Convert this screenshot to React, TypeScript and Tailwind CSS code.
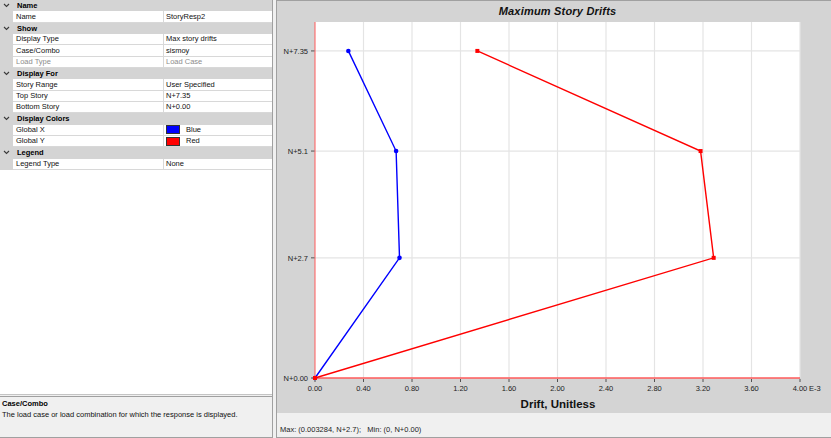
import React from "react";

const FONT = '"Liberation Sans", Arial, sans-serif';

type Row =
  | { kind: "header"; label: string }
  | { kind: "prop"; name: string; value: string; disabled?: boolean; swatch?: string };

const rows: Row[] = [
  { kind: "header", label: "Name" },
  { kind: "prop", name: "Name", value: "StoryResp2" },
  { kind: "header", label: "Show" },
  { kind: "prop", name: "Display Type", value: "Max story drifts" },
  { kind: "prop", name: "Case/Combo", value: "sismoy" },
  { kind: "prop", name: "Load Type", value: "Load Case", disabled: true },
  { kind: "header", label: "Display For" },
  { kind: "prop", name: "Story Range", value: "User Specified" },
  { kind: "prop", name: "Top Story", value: "N+7.35" },
  { kind: "prop", name: "Bottom Story", value: "N+0.00" },
  { kind: "header", label: "Display Colors" },
  { kind: "prop", name: "Global X", value: "Blue", swatch: "#0000ff" },
  { kind: "prop", name: "Global Y", value: "Red", swatch: "#ff0000" },
  { kind: "header", label: "Legend" },
  { kind: "prop", name: "Legend Type", value: "None" },
];

function Chevron() {
  return (
    <svg width="7" height="5" viewBox="0 0 7 5">
      <path d="M1 1 L3.5 3.5 L6 1" stroke="#3a3a3a" strokeWidth="1.1" fill="none" />
    </svg>
  );
}

function GridRow({ row }: { row: Row }) {
  if (row.kind === "header") {
    return (
      <div className="flex h-[11.33px] items-center bg-[#d4d4d4]">
        <div className="flex w-[13px] justify-center">
          <Chevron />
        </div>
        <span className="pl-[4px] font-bold text-[#000]">{row.label}</span>
      </div>
    );
  }
  return (
    <div className="flex h-[11.33px] bg-[#d4d4d4]">
      <div className="w-[13px]" />
      <div className="flex flex-1 border-b border-[#d8d8d8] bg-white">
        <div
          className={`flex w-[151px] items-center border-r border-[#d8d8d8] pl-[3px] ${
            row.disabled ? "text-[#8d8d8d]" : "text-[#111]"
          }`}
        >
          {row.name}
        </div>
        <div
          className={`flex flex-1 items-center pl-[2px] ${
            row.disabled ? "text-[#8d8d8d]" : "text-[#111]"
          }`}
        >
          {row.swatch && (
            <span
              className="mr-[6px] inline-block h-[9px] w-[14px] border border-[#333]"
              style={{ backgroundColor: row.swatch }}
            />
          )}
          {row.value}
        </div>
      </div>
    </div>
  );
}

// plot geometry (svg units)
const X0 = 38;
const XU = 121.25; // px per 1.0 E-3
const Y0 = 356;
const YU = 44.5; // px per metre of elevation
const px = (v: number) => X0 + v * XU;
const py = (v: number) => Y0 - v * YU;

const stories = [
  { label: "N+0.00", v: 0 },
  { label: "N+2.7", v: 2.7 },
  { label: "N+5.1", v: 5.1 },
  { label: "N+7.35", v: 7.35 },
];
const xTicks = [0, 0.4, 0.8, 1.2, 1.6, 2.0, 2.4, 2.8, 3.2, 3.6, 4.0];

const blue = [
  [0, 0],
  [0.697, 2.7],
  [0.669, 5.1],
  [0.275, 7.35],
];
const red = [
  [0, 0],
  [3.288, 2.7],
  [3.18, 5.1],
  [1.339, 7.35],
];

function DriftChart() {
  const pts = (d: number[][]) => d.map(([x, y]) => `${px(x)},${py(y)}`).join(" ");
  return (
    <svg width="553" height="391" className="block" style={{ fontFamily: FONT }}>
      <rect x={X0} y={0} width={485} height={356} fill="#ffffff" />
      {xTicks.slice(1).map((t) => (
        <line key={t} x1={px(t)} x2={px(t)} y1={0} y2={356} stroke="#e4e4e4" strokeWidth="1.2" />
      ))}
      {stories.slice(1).map((s) => (
        <line key={s.label} x1={X0} x2={523} y1={py(s.v)} y2={py(s.v)} stroke="#e4e4e4" strokeWidth="1.2" />
      ))}
      {/* axes */}
      <line x1={X0} x2={X0} y1={0} y2={357} stroke="#ff5a5a" strokeWidth="1" />
      <line x1={X0} x2={523} y1={356} y2={356} stroke="#ff5a5a" strokeWidth="1.6" />
      {/* y ticks and labels */}
      {stories.map((s) => (
        <g key={s.label}>
          <line x1={34} x2={37.5} y1={py(s.v)} y2={py(s.v)} stroke="#444" strokeWidth="0.9" />
          <text x={31} y={py(s.v) + 2.7} fontSize="7.5" textAnchor="end" fill="#222">
            {s.label}
          </text>
        </g>
      ))}
      {/* x ticks and labels */}
      {xTicks.map((t) => (
        <g key={t}>
          <line x1={px(t)} x2={px(t)} y1={357} y2={360} stroke="#444" strokeWidth="0.9" />
          <text x={px(t)} y={369} fontSize="7.5" textAnchor="middle" fill="#222">
            {t.toFixed(2)}
          </text>
        </g>
      ))}
      <text x={px(4) + 9} y={369} fontSize="7.5" fill="#222">
        E-3
      </text>
      <text x={281} y={386} fontSize="11.5" fontWeight="bold" textAnchor="middle" fill="#111">
        Drift, Unitless
      </text>
      {/* series */}
      <polyline points={pts(blue)} fill="none" stroke="#0000ff" strokeWidth="1.4" />
      <polyline points={pts(red)} fill="none" stroke="#ff0000" strokeWidth="1.4" />
      {blue.map(([x, y], i) => (
        <circle key={i} cx={px(x)} cy={py(y)} r="2.3" fill="#0000ff" />
      ))}
      {red.map(([x, y], i) => (
        <rect key={i} x={px(x) - 2} y={py(y) - 2} width="4" height="4" fill="#ff0000" />
      ))}
    </svg>
  );
}

export default function App() {
  return (
    <div
      className="flex h-[438px] w-[831px] overflow-hidden bg-[#f0f0f0] text-[7.5px] leading-none"
      style={{ fontFamily: FONT }}
    >
      {/* property grid panel */}
      <div className="flex w-[273px] flex-col border-r border-[#a0a0a0]">
        <div className="flex flex-1 flex-col bg-white">
          {rows.map((r, i) => (
            <GridRow key={i} row={r} />
          ))}
        </div>
        <div className="h-[1px] bg-[#c4c4c4]" />
        <div className="h-[1px] bg-[#f0f0f0]" />
        <div className="flex h-[42px] flex-col border-t border-b border-[#a0a0a0] bg-[#f0f0f0] px-[2px] pt-[3px]">
          <div className="font-bold text-[#000]">Case/Combo</div>
          <div className="mt-[3px] text-[#111]">
            The load case or load combination for which the response is displayed.
          </div>
        </div>
      </div>

      <div className="w-[3px]" />

      {/* chart panel */}
      <div className="flex flex-1 flex-col border-l border-t border-b border-[#a0a0a0]">
        <div className="flex flex-col bg-[#d4d4d4]">
          <div className="flex h-[21px] items-center justify-center pl-[7px] text-[11px] font-bold italic tracking-[0.2px] text-[#111]">
            Maximum Story Drifts
          </div>
          <DriftChart />
        </div>
        <div className="flex flex-1 items-end bg-[#f0f0f0] pb-[4px] pl-[3px] text-[#222]">
          <span className="whitespace-pre">Max: (0.003284, N+2.7);   Min: (0, N+0.00)</span>
        </div>
      </div>
    </div>
  );
}
